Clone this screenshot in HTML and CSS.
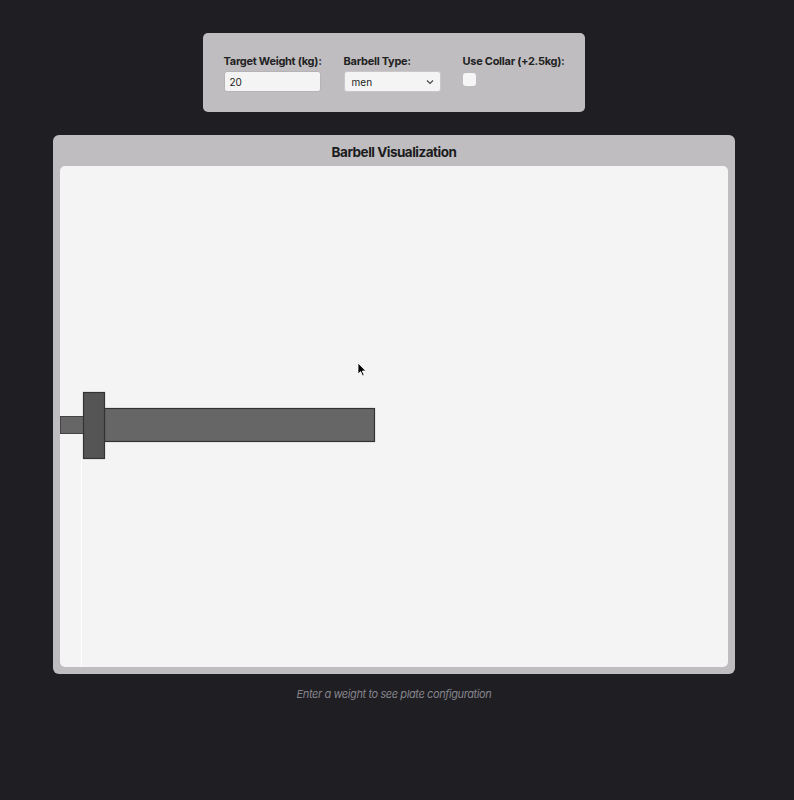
FILE: index.html
```html
<!DOCTYPE html>
<html>
<head>
<meta charset="utf-8">
<link rel="stylesheet" href="styles.css">
</head>
<body>
<div class="page">
  <div class="controls">
    <div class="group">
      <label class="lbl">Target Weight (kg):</label>
      <div class="field input">20</div>
    </div>
    <div class="group">
      <label class="lbl">Barbell Type:</label>
      <div class="field select"><span>men</span>
        <svg class="chev" width="8" height="6" viewBox="0 0 8 6"><path d="M1 1.5 L4 4.5 L7 1.5" fill="none" stroke="#444" stroke-width="1.1"/></svg>
      </div>
    </div>
    <div class="group">
      <label class="lbl">Use Collar (+2.5kg):</label>
      <div class="check"></div>
    </div>
  </div>

  <div class="viz">
    <div class="viz-title">Barbell Visualization</div>
    <div class="canvas">
      <svg class="bar-svg" width="668" height="501" viewBox="0 0 668 501">
        <line x1="21.5" y1="292" x2="21.5" y2="501" stroke="#ffffff" stroke-width="1"/>
        <rect x="0.5" y="250.5" width="23" height="17" fill="#666666" stroke="#444444" stroke-width="1"/>
        <rect x="44.5" y="242.5" width="270" height="33" fill="#666666" stroke="#333333" stroke-width="1.2"/>
        <rect x="23.5" y="226.5" width="21" height="66" fill="#555555" stroke="#333333" stroke-width="1.2"/>
      </svg>
      <svg class="cursor" width="12" height="16" viewBox="0 0 12 16"><path d="M1 1 L1 12 L3.6 9.6 L5.6 14 L7.2 13.3 L5.3 9 L8.8 9 Z" fill="#000" stroke="#fff" stroke-width="0.8"/></svg>
    </div>
  </div>

  <div class="hint">Enter a weight to see plate configuration</div>
</div>
</body>
</html>
```
FILE: styles.css
```css
html, body {
  margin: 0;
  padding: 0;
  background: #1f1e23;
  font-family: Inter, "Noto Sans", "Liberation Sans", sans-serif;
}
body {
  padding-right: 6px;
  min-height: 800px;
}
.page {
  display: flex;
  flex-direction: column;
  align-items: center;
  padding-top: 33px;
}
.controls {
  display: flex;
  gap: 22px;
  background: #bfbdc0;
  border-radius: 5px;
  padding: 21px 21px 0 21px;
  height: 58px;
}
.group {
  display: flex;
  flex-direction: column;
  align-items: flex-start;
}
.lbl {
  font-size: 11px;
  font-weight: 700;
  letter-spacing: -0.28px;
  color: #222222;
  line-height: 15px;
  margin-bottom: 2px;
  white-space: nowrap;
}
.field {
  box-sizing: border-box;
  width: 97px;
  height: 21px;
  background: #f4f4f4;
  border: 1px solid #b5b3b6;
  border-radius: 3px;
  font-size: 10px;
  color: #222;
  display: flex;
  align-items: center;
  padding-left: 5px;
}
.select {
  justify-content: space-between;
  padding-left: 7px;
  padding-right: 6px;
  border-color: #c9c7ca;
}
.chev { display: block; }
.check {
  width: 13px;
  height: 13px;
  background: #f6f6f6;
  border-radius: 3px;
  margin-top: 2px;
}
.viz {
  margin-top: 23px;
  width: 682px;
  height: 539px;
  box-sizing: border-box;
  background: #bfbdc0;
  border-radius: 6px;
  padding: 0 7px 7px 7px;
  display: flex;
  flex-direction: column;
}
.viz-title {
  height: 31px;
  line-height: 34px;
  text-align: center;
  font-size: 13.5px;
  font-weight: 700;
  letter-spacing: -0.5px;
  color: #1c1c1e;
}
.canvas {
  position: relative;
  flex: 1;
  background: #f4f4f4;
  border-radius: 5px;
  overflow: hidden;
}
.bar-svg {
  display: block;
}
.cursor {
  position: absolute;
  left: 297px;
  top: 196px;
}
.hint {
  margin-top: 13px;
  font-size: 11px;
  font-style: italic;
  letter-spacing: -0.4px;
  color: #85848a;
  line-height: 14px;
}
```
